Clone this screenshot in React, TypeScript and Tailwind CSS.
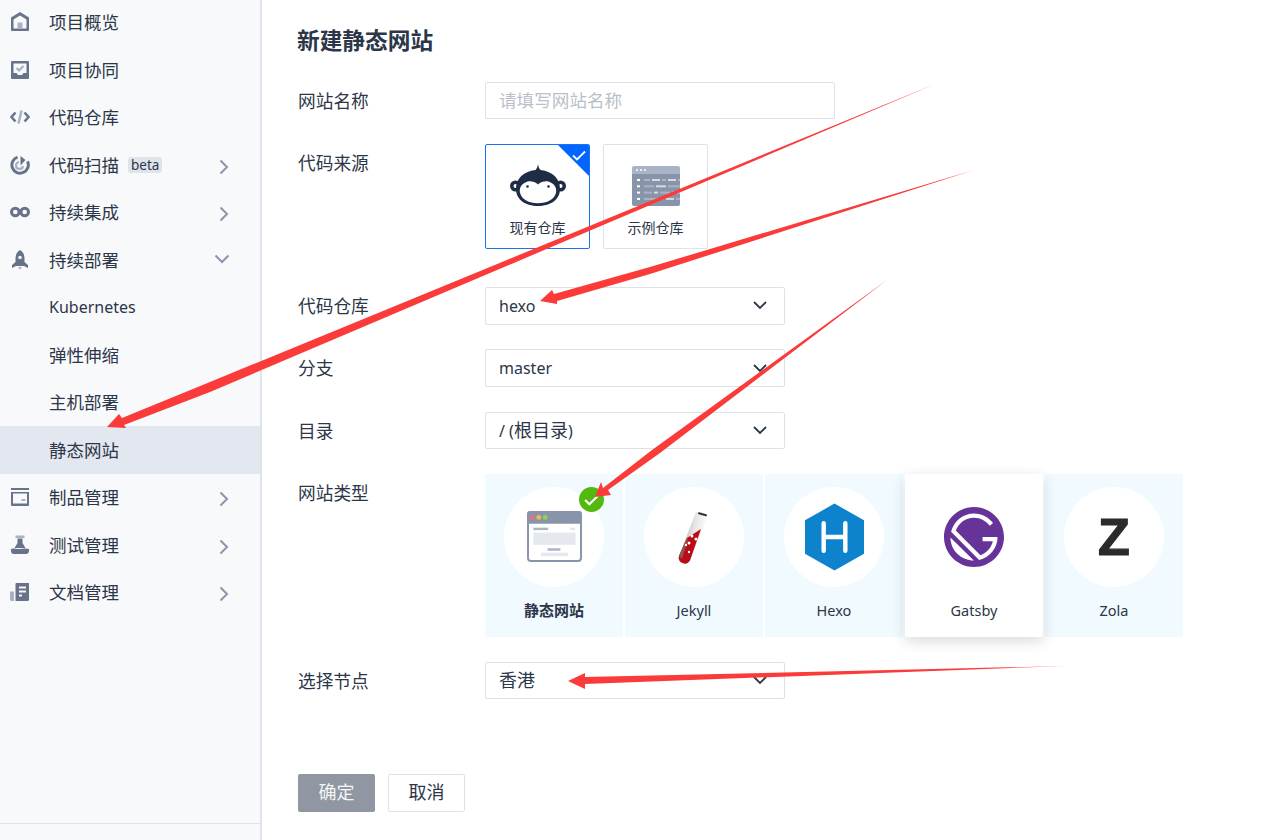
import React from 'react';
import { SiGatsby } from 'react-icons/si';

const font = '[font-family:"Noto_Sans","Noto_Sans_CJK_SC",sans-serif]';

function Chevron({ down }: { down?: boolean }) {
  return down ? (
    <svg width="16" height="10" viewBox="0 0 16 10" fill="none" stroke="#8c96ab" strokeWidth="2"><path d="M1.5 1.5 8 8l6.500-6.500" /></svg>
  ) : (
    <svg width="10" height="16" viewBox="0 0 10 16" fill="none" stroke="#8c96ab" strokeWidth="2"><path d="M1.500 1.500 8 8l-6.500 6.500" /></svg>
  );
}

const G = '#68738a';
const L = '#a9b2c3';

const icons: Record<string, React.ReactNode> = {
  home: (
    <svg width="20" height="20" viewBox="0 0 20 20"><path fill={G} d="M10 0 1 5.500V18a1 1 0 0 0 1 1h16a1 1 0 0 0 1-1V5.500z" /><path fill="#f7f9fb" d="M10 3.500 3.500 7.500V16.500h13V7.500z" /><rect x="7.500" y="10.500" width="5" height="6" fill={L} /></svg>
  ),
  task: (
    <svg width="20" height="20" viewBox="0 0 20 20"><rect x="1" y="1" width="18" height="18" rx="1" fill={G} /><path fill="#f7f9fb" d="M3.500 3.500h13V13h-3l-1.500 2H8l-1.500-2h-3z" /><path d="m6.500 8 2.500 2.500 4.500-4.500" fill="none" stroke={L} strokeWidth="2.200" /></svg>
  ),
  code: (
    <svg width="20" height="20" viewBox="0 0 20 20" fill="none" strokeWidth="2.500"><path d="M5.500 5.500 1.500 10l4 4.500M14.500 5.500l4 4.500-4 4.500" stroke={G} /><path d="M11.500 3.500 8.500 16.500" stroke={L} /></svg>
  ),
  scan: (
    <svg width="20" height="20" viewBox="0 0 20 20" fill="none"><path d="M7.500 2.200a8.200 8.200 0 1 0 10 4.200" stroke={G} strokeWidth="3" /><path d="M9 7a3.500 3.500 0 1 0 4 4" stroke={L} strokeWidth="2.200" /><path d="M10.500 1 15.500 5l-5 5.500z" fill={G} /></svg>
  ),
  loop: (
    <svg width="20" height="20" viewBox="0 0 20 20" fill="none" stroke={G} strokeWidth="3"><circle cx="5.300" cy="10" r="3.800" /><circle cx="14.700" cy="10" r="3.800" /></svg>
  ),
  rocket: (
    <svg width="20" height="20" viewBox="0 0 20 20"><path fill={G} d="M10 0c3.500 2 4.500 5 4.500 8.500V12l3.500 3v3l-4-2H6l-4 2v-3l3.500-3V8.500C5.500 5 6.500 2 10 0z" /><circle cx="10" cy="7.500" r="1.800" fill="#f7f9fb" /><path fill={L} d="M8.300 17h3.400L10 20z" /></svg>
  ),
  box: (
    <svg width="20" height="20" viewBox="0 0 20 20"><path fill={G} d="M1 1h18v2H1zM1 5h18v13a1 1 0 0 1-1 1H2a1 1 0 0 1-1-1z" /><rect x="3" y="6.500" width="14" height="10" fill="#f7f9fb" /><rect x="11.500" y="12" width="4" height="2" fill={L} /></svg>
  ),
  flask: (
    <svg width="20" height="20" viewBox="0 0 20 20"><rect x="5.500" y="0.500" width="9" height="2.500" fill={L} /><path fill={G} d="M7.500 3.500h5V8l3 5H4.500l3-5z" /><path fill={G} d="M1 14c3-1.500 5 .5 9 0s6-1 9 0v2c0 2-1.500 3-3 3H4c-2 0-3-1-3-3z" /></svg>
  ),
  doc: (
    <svg width="20" height="20" viewBox="0 0 20 20"><path fill={L} d="M0 9.500h4V19H1.500A1.500 1.500 0 0 1 0 17.500z" /><path fill={G} d="M5.500 2a1 1 0 0 1 1-1H19v16.500a1.500 1.500 0 0 1-1.500 1.500h-12z" /><path d="M9 5.500h7M9 9.500h7" stroke="#f7f9fb" strokeWidth="2" /><rect x="9" y="12.500" width="3" height="2" fill="#f7f9fb" /></svg>
  ),
};

const menu = [
  { label: '项目概览', icon: 'home' },
  { label: '项目协同', icon: 'task' },
  { label: '代码仓库', icon: 'code' },
  { label: '代码扫描', icon: 'scan', arrow: 'right', badge: 'beta' },
  { label: '持续集成', icon: 'loop', arrow: 'right' },
  { label: '持续部署', icon: 'rocket', arrow: 'down' },
  { label: 'Kubernetes', latin: true },
  { label: '弹性伸缩' },
  { label: '主机部署' },
  { label: '静态网站', active: true },
  { label: '制品管理', icon: 'box', arrow: 'right' },
  { label: '测试管理', icon: 'flask', arrow: 'right' },
  { label: '文档管理', icon: 'doc', arrow: 'right' },
];

function Sidebar() {
  return (
    <aside className="w-[262px] shrink-0 h-full bg-[#f7f9fb] border-r-2 border-[#dfe4ec] flex flex-col justify-between">
      <ul className="-mt-[1.5px]">
        {menu.map(item => (
          <li key={item.label} className={`h-[47.5px] flex items-center pl-[10px] pr-[31px] ${item.active ? 'bg-[#e3e7ef]' : ''}`}>
            <span className="w-[20px] h-[20px] shrink-0">{item.icon ? icons[item.icon] : null}</span>
            <span className={`ml-[19px] text-[#2c3648] ${item.latin ? 'text-[16px]' : 'text-[17.500px]'}`}>{item.label}</span>
            {item.badge && (
              <span className="ml-[9px] h-[16px] px-[3px] rounded-[3px] bg-[#dfe3ea] text-[13.500px] leading-[16px] text-[#2c3648]">{item.badge}</span>
            )}
            {item.arrow === 'right' && <span className="ml-auto mt-[4px] flex"><Chevron /></span>}
            {item.arrow === 'down' && <span className="ml-auto -mr-[1px] flex -translate-y-[1px]"><Chevron down /></span>}
          </li>
        ))}
      </ul>
      <div className="h-[17px] border-t border-[#dfe4ec]" />
    </aside>
  );
}

function FieldRow({ label, children, className = '' }: { label: string; children: React.ReactNode; className?: string }) {
  return (
    <div className={`flex ${className}`}>
      <label className="w-[187px] shrink-0 h-[37.500px] pt-[1px] leading-[37.500px] text-[17.700px] text-[#2c3648]">{label}</label>
      {children}
    </div>
  );
}

function Select({ value, cjk }: { value: string; cjk?: string }) {
  return (
    <div className="w-[300px] h-[37.500px] rounded-[2px] border border-[#dce1ea] bg-white flex items-center justify-between pl-[13px] pr-[17px] text-[16px] text-[#2c3648]">
      <span>{value}{cjk && <span className="text-[18px]">{cjk}</span>}{value.includes('(') ? ')' : ''}</span>
      <svg width="14" height="9" viewBox="0 0 14 9" fill="none" stroke="#2d374a" strokeWidth="1.800"><path d="M1 1l6 6 6-6" /></svg>
    </div>
  );
}

function Monkey() {
  return (
    <svg width="56" height="42" viewBox="0 0 56 42">
      <circle cx="5.500" cy="22" r="5.500" fill="#1f2d44" />
      <circle cx="50.500" cy="22" r="5.500" fill="#1f2d44" />
      <circle cx="5.500" cy="22" r="2" fill="#fff" />
      <circle cx="50.500" cy="22" r="2" fill="#fff" />
      <path fill="#1f2d44" d="M28 0c.500 3 1 4.500 2.500 6C43 7.500 50 15 50 25c0 11-10 17-22 17S6 36 6 25C6 15 13 7.500 25.500 6 27 4.500 27.500 3 28 0z" />
      <path fill="#fff" d="M28 20.500c3-3 8-4 11-2.800 6 2 8 7 7 11-1.500 6.500-9 10.500-18 10.500s-16.500-4-18-10.500c-1-4 1-9 7-11 3-1.200 8-.200 11 2.800z" />
      <circle cx="17.500" cy="22.500" r="1.300" fill="#1f2d44" />
      <circle cx="38.500" cy="22.500" r="1.300" fill="#1f2d44" />
    </svg>
  );
}

function SampleRepo() {
  const rows = [
    [6, 8, 4, 8, 6, 8],
    [10, 10, 16],
    [8, 4, 10, 10],
    [20, 8, 8],
  ];
  return (
    <svg width="48" height="40" viewBox="0 0 48 40">
      <path fill="#a9b4c8" d="M0 8V2a2 2 0 0 1 2-2h44a2 2 0 0 1 2 2v6z" />
      <path fill="#8894a9" d="M0 8h48v30a2 2 0 0 1-2 2H2a2 2 0 0 1-2-2z" />
      <circle cx="5" cy="4" r="1" fill="#fff" /><circle cx="9" cy="4" r="1" fill="#fff" /><circle cx="13" cy="4" r="1" fill="#fff" />
      {rows.map((row, r) => {
        let x = 12;
        return (
          <g key={r}>
            <rect x="5" y={13 + r * 6.300} width="3" height="2" fill="#fff" />
            {row.map((w, i) => {
              const el = <rect key={i} x={x} y={13 + r * 6.300} width={w} height="2" fill={i % 2 ? '#d5dae3' : '#aab3c3'} />;
              x += w + 2;
              return el;
            })}
          </g>
        );
      })}
    </svg>
  );
}

function StaticSite() {
  return (
    <svg width="55" height="51" viewBox="0 0 56 52">
      <rect x="1" y="1" width="54" height="50" rx="3" fill="#fff" stroke="#8894a9" strokeWidth="2" />
      <path fill="#8894a9" d="M0 13V3a3 3 0 0 1 3-3h50a3 3 0 0 1 3 3v10z" />
      <circle cx="5.500" cy="6.500" r="2.500" fill="#ef6f7a" /><circle cx="12" cy="6.500" r="2.500" fill="#eebb45" /><circle cx="18.500" cy="6.500" r="2.500" fill="#8fd35a" />
      <rect x="6.500" y="17" width="15" height="2.500" fill="#a9b4c8" /><rect x="44" y="17" width="5" height="2.500" fill="#e3e6ec" />
      <rect x="6.500" y="22" width="43" height="12.500" fill="#e5e8ed" />
      <rect x="21" y="38" width="13" height="2.500" fill="#a9b4c8" /><rect x="14" y="42.500" width="28" height="3.500" fill="#e5e8ed" />
    </svg>
  );
}

function TestTube() {
  return (
    <svg width="34" height="56" viewBox="0 0 34 56">
      <defs>
        <linearGradient id="tube" x1="0" y1="0" x2="1" y2="0.300">
          <stop offset="0" stopColor="#8f8f8f" />
          <stop offset="0.550" stopColor="#e4e4e4" />
          <stop offset="1" stopColor="#ffffff" />
        </linearGradient>
      </defs>
      <path d="M19 3 2 47a6 6 0 0 0 11 4.500L31 6z" fill="url(#tube)" />
      <path d="M10 29 24 20 13 51.500A6 6 0 0 1 2 47z" fill="#bb0b15" />
      <path d="M2 47 10 29 11 30 5 50z" fill="#8a5555" />
      <circle cx="15" cy="27" r="1.500" fill="#fff" /><circle cx="19" cy="30" r="1.500" fill="#fff" /><circle cx="12" cy="34" r="1.500" fill="#fff" /><circle cx="9" cy="36" r="1.200" fill="#fff" /><circle cx="12" cy="43" r="1.200" fill="#fff" />
      <path d="M22 4.300 29 6.300" stroke="#333" strokeWidth="2" strokeLinecap="round" />
    </svg>
  );
}

function Hexo() {
  return (
    <svg className="ml-[1px]" width="59" height="68" viewBox="0 0 60 68">
      <path fill="#0e83cd" d="M30 0 60 17v34L30 68 0 51V17z" />
      <path d="M19 20v28M41 20v28M19 34h22" stroke="#fff" strokeWidth="4.500" strokeLinecap="round" fill="none" />
    </svg>
  );
}

const siteTypes = [
  { name: '静态网站', icon: <StaticSite />, selected: true },
  { name: 'Jekyll', icon: <TestTube /> },
  { name: 'Hexo', icon: <Hexo /> },
  { name: 'Gatsby', icon: <SiGatsby size={60} color="#663399" />, hovered: true },
  { name: 'Zola', icon: <span className="text-[52px] leading-none font-bold text-[#2b2b2b] [-webkit-text-stroke:1.200px_#2b2b2b] [font-family:'Liberation_Sans',sans-serif]">Z</span> },
];

function Arrows() {
  return (
    <svg className="absolute inset-0 pointer-events-none" width="1268" height="840" viewBox="0 0 1268 840">
      <path fill="#fb3a3a" d="M935 84 210 382 122 418 119 414 107 427 126 428 124 425 210 392Z" />
      <path fill="#fb3a3a" d="M974 170 650 267 554 294 552 290 540 301 557 304 557 301 650 274Z" />
      <path fill="#fb3a3a" d="M887 280 652 450 603 488 601 482 595 497 611 495 608 490 660 453Z" />
      <path fill="#fb3a3a" d="M1066 666 585 677 585 673 568 681 585 689 585 684Z" />
    </svg>
  );
}

export default function App() {
  return (
    <div className={`relative w-[1268px] h-[840px] overflow-hidden bg-white flex ${font}`}>
      <Sidebar />
      <main className="flex-1 pl-[36px] pt-[25px]">
        <h1 className="-ml-[1px] text-[22.700px] leading-[32px] font-bold text-[#2c3648] mb-[24.500px]">新建静态网站</h1>
        <FieldRow label="网站名称">
          <div className="w-[350px] h-[37.500px] rounded-[2px] border border-[#dce1ea] pl-[13px] flex items-center text-[17.600px] text-[#b9bfca]">请填写网站名称</div>
        </FieldRow>
        <FieldRow label="代码来源" className="mt-[25px]">
          <div className="flex gap-[13px]">
            <div className="relative w-[105px] h-[105px] rounded-[2px] border border-[#1a73f0] flex flex-col items-center overflow-hidden">
              <div className="absolute top-0 right-0 w-0 h-0 border-t-[31px] border-l-[31px] border-t-[#0066ff] border-l-transparent" />
              <svg className="absolute top-[5px] right-[3px]" width="14" height="11" viewBox="0 0 14 11" fill="none" stroke="#fff" strokeWidth="1.800"><path d="m1 5.500 4 4 8-8" /></svg>
              <div className="mt-[19px] h-[42px]"><Monkey /></div>
              <span className="mt-[12px] text-[14px] leading-[20px] text-[#2c3648]">现有仓库</span>
            </div>
            <div className="w-[105px] h-[105px] rounded-[2px] border border-[#dce1ea] flex flex-col items-center">
              <div className="mt-[21px] h-[40px]"><SampleRepo /></div>
              <span className="mt-[12px] text-[14px] leading-[20px] text-[#2c3648]">示例仓库</span>
            </div>
          </div>
        </FieldRow>
        <FieldRow label="代码仓库" className="mt-[38px]"><Select value="hexo" /></FieldRow>
        <FieldRow label="分支" className="mt-[24.800px]"><Select value="master" /></FieldRow>
        <FieldRow label="目录" className="mt-[25px]"><Select value="/ (" cjk="根目录" /></FieldRow>
        <FieldRow label="网站类型" className="mt-[24.700px]">
          <div className="flex gap-[2px]">
            {siteTypes.map(t => (
              <div key={t.name} className={`relative w-[138px] h-[163px] rounded-[2px] flex flex-col items-center pt-[13px] ${t.hovered ? 'bg-white shadow-[0_4px_14px_rgba(30,45,70,0.18)] z-10' : 'bg-[#f1faff]'}`}>
                <div className={`relative w-[100px] h-[100px] rounded-full flex items-center justify-center ${t.hovered ? '' : 'bg-white'}`}>
                  {t.icon}
                  {t.selected && (
                    <span className="absolute top-0 right-0 w-[25px] h-[25px] rounded-full bg-[#52b910] flex items-center justify-center">
                      <svg className="mt-[2px]" width="15" height="12" viewBox="0 0 14 11" fill="none" stroke="#fff" strokeWidth="2"><path d="m1 5.500 4 4 8-8" /></svg>
                    </span>
                  )}
                </div>
                <span className={`mt-[12px] leading-[22px] text-[#2c3648] ${t.selected ? 'font-bold text-[15px]' : 'text-[14.500px]'}`}>{t.name}</span>
              </div>
            ))}
          </div>
        </FieldRow>
        <FieldRow label="选择节点" className="mt-[25px]"><Select value="" cjk="香港" /></FieldRow>
        <div className="mt-[74.500px] flex gap-[13px] text-[18px]">
          <button className="w-[77px] h-[38px] rounded-[2px] bg-[#9097a2] text-white/90">确定</button>
          <button className="w-[77px] h-[38px] rounded-[2px] border border-[#dce1ea] text-[#2c3648]">取消</button>
        </div>
      </main>
      <Arrows />
    </div>
  );
}
